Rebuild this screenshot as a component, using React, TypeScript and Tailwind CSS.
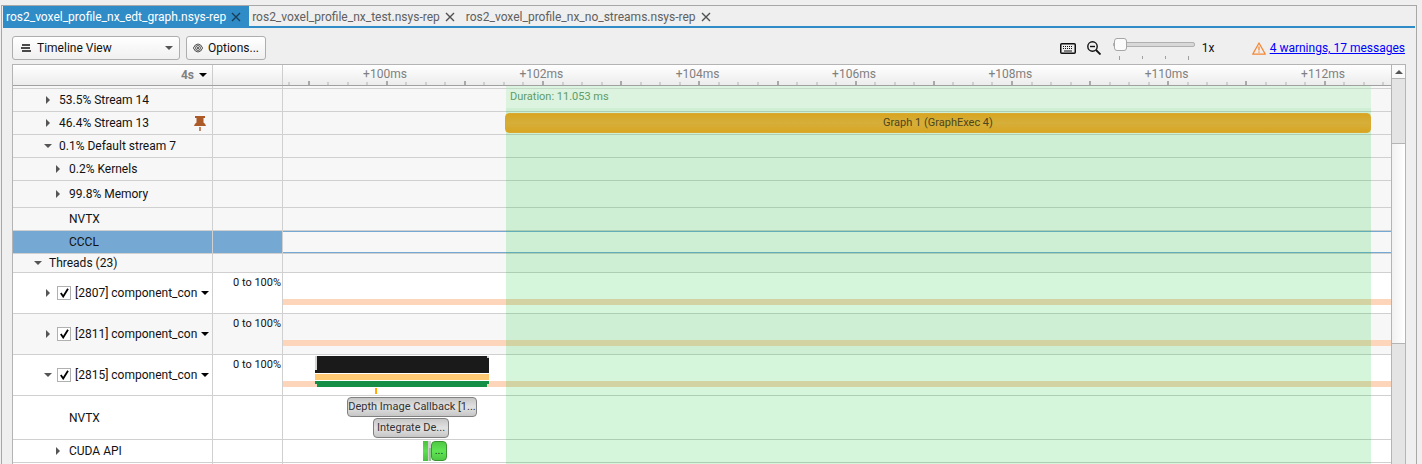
import React from "react";

const AXIS = 1108;
const pct = (n: number) => `${(n / AXIS) * 100}%`;
const LABELS = [100, 102, 104, 106, 108, 110, 112];

function TriRight() {
  return (
    <svg className="h-2 w-1 shrink-0" viewBox="0 0 4 8" fill="#555"><path d="M0 0 4 4 0 8Z" /></svg>
  );
}
function TriDown({ dark = false }: { dark?: boolean }) {
  return (
    <svg className="h-1 w-2 shrink-0" viewBox="0 0 8 4" fill={dark ? "#000" : "#555"}><path d="M0 0H8L4 4Z" /></svg>
  );
}
function Cross() {
  return (
    <svg className="size-[10px]" viewBox="0 0 10 10" fill="none" stroke="currentColor" strokeWidth="1.4"><path d="M1 1 9 9M9 1 1 9" /></svg>
  );
}

function Tab({ name, active = false }: { name: string; active?: boolean }) {
  return (
    <div className={active
      ? "flex h-[22px] items-center gap-[5px] bg-[#308cc6] pl-[3px] pr-2 text-white"
      : "flex h-[22px] items-center gap-[5px] pl-[3px] pr-2 text-[#606060]"}>
      <button role="tab" aria-selected={active} className="leading-5">{name}</button>
      <button aria-label={`Close ${name}`} className={active ? "text-[#173f5a]" : "text-[#505050]"}><Cross /></button>
    </div>
  );
}

function Toolbar() {
  return (
    <div className="flex h-9 items-center pl-[10px] pr-[11px] pt-1">
      <button className="flex h-6 w-[168px] items-center rounded-[3px] border border-[#aeaeae] bg-linear-to-b from-white to-[#f0f0f0] pl-2 pr-[6px]">
        <svg className="mr-[6px] h-2 w-[10px]" viewBox="0 0 10 8" stroke="#111" strokeWidth="1.3"><path d="M1 1H9M0 4H9M1 7H10" /></svg>
        <span className="flex-1 text-left">Timeline View</span>
        <TriDown />
      </button>
      <button className="ml-[6px] flex h-6 w-20 items-center gap-[5px] rounded-[3px] border border-[#aeaeae] bg-linear-to-b from-white to-[#f0f0f0] pl-[6px]">
        <svg className="h-[10px] w-[10px] shrink-0" viewBox="0 0 10 10" fill="none" stroke="#222" strokeWidth=".8"><path d="M.4 5Q2 1 5 1T9.600 5Q8 9 5 9T.4 5Z" /><circle cx="5" cy="5" r="2.400" /><circle cx="5" cy="5" r=".6" fill="#222" /></svg>
        Options...
      </button>
      <div className="flex-1" />
      <button aria-label="Keyboard shortcuts">
        <svg className="h-[11px] w-4" viewBox="0 0 16 11"><rect x=".75" y=".75" width="14.500" height="9.500" rx="1" fill="none" stroke="#111" strokeWidth="1.500" /><path d="M3 3.500H13M3 5.500H13" stroke="#111" strokeWidth="1" strokeDasharray="1 1" /><path d="M4 8H12" stroke="#111" /></svg>
      </button>
      <button aria-label="Zoom out" className="ml-[11px]">
        <svg className="size-[14px]" viewBox="0 0 14 14" fill="none" stroke="#111" strokeWidth="1.400"><circle cx="5.500" cy="5.500" r="4.700" /><path d="M3 5.500H8" /><path d="M9 9 13.500 13.500" strokeWidth="1.800" /></svg>
      </button>
      <div className="ml-3 flex h-6 w-[82px] flex-col pt-px">
        <input type="range" min="1" max="100" defaultValue="1" aria-label="Zoom"
          className="h-[14px] w-full appearance-none bg-transparent [&::-webkit-slider-runnable-track]:h-[5px] [&::-webkit-slider-runnable-track]:rounded-[2px] [&::-webkit-slider-runnable-track]:border [&::-webkit-slider-runnable-track]:border-[#b0b0b0] [&::-webkit-slider-runnable-track]:bg-[#d8d8d8] [&::-webkit-slider-thumb]:-mt-[5px] [&::-webkit-slider-thumb]:size-[13px] [&::-webkit-slider-thumb]:appearance-none [&::-webkit-slider-thumb]:rounded-[3px] [&::-webkit-slider-thumb]:border [&::-webkit-slider-thumb]:border-[#a6a6a6] [&::-webkit-slider-thumb]:bg-[#fbfbfb]" />
        <div className="mt-[5px] flex justify-between px-[6px]">
          {[0, 1, 2, 3].map((i) => <i key={i} className={i % 3 ? "h-[3px] w-px bg-[#a0a0a0]" : "h-1 w-px bg-[#a0a0a0]"} />)}
        </div>
      </div>
      <span className="ml-[7px] w-[50px]">1x</span>
      <svg className="mr-1 h-[13px] w-[14px]" viewBox="0 0 14 13" fill="none" stroke="#f58634" strokeWidth="1.300" strokeLinejoin="round"><path d="M7 1 13.300 12.200H.7Z" /><path d="M7 4.500V8.500M7 9.500V10.800" /></svg>
      <a href="#messages" className="text-[#0000ff] underline">4 warnings, 17 messages</a>
    </div>
  );
}

function Ruler() {
  const ticks = Array.from({ length: 57 }, (_, i) => ({ x: 5 + i * 19.54, major: i % 4 === 1 }));
  return (
    <div className="relative h-5 min-w-0 flex-1 overflow-hidden">
      {LABELS.map((ms, i) => (
        <span key={ms} className="absolute top-0 -translate-x-1/2 text-[12px] leading-[18px] text-[#808080]" style={{ left: pct(102 + i * 156.33) }}>+{ms}ms</span>
      ))}
      {ticks.map((t) => (
        <i key={t.x} className={t.major ? "absolute bottom-0 h-1 w-[2px] bg-[#a9a9a9]" : "absolute bottom-0 h-[3px] w-[2px] bg-[#cfcfcf]"} style={{ left: pct(t.x) }} />
      ))}
    </div>
  );
}

function Header() {
  return (
    <div className="flex h-[21px] border-b border-[#a0a0a0] bg-linear-to-b from-white to-[#ececec]">
      <div className="flex w-[200px] items-center justify-end gap-[5px] border-r border-[#cdcdcd] pr-[5px] font-bold text-[#808080]">
        4s <TriDown dark />
      </div>
      <div className="w-[70px] border-r border-[#cdcdcd]" />
      <Ruler />
    </div>
  );
}

type RowProps = {
  height: string;
  indent?: string;
  label?: string;
  arrow?: "right" | "down";
  white?: boolean;
  selected?: boolean;
  thread?: boolean;
  pinned?: boolean;
  children?: React.ReactNode;
};

function Row({ height, indent = "pl-8", label, arrow, white, selected, thread, pinned, children }: RowProps) {
  const bg = selected ? "bg-[#75a9d4]" : white ? "bg-white" : "bg-[#f7f7f7]";
  return (
    <div className={`flex ${height}`}>
      <div className={`flex w-[200px] items-center border-r border-b border-[#d0d0d0] ${thread ? "pr-[3px]" : "pr-[6px]"} ${bg} ${indent}`}>
        {label && <span className={`flex shrink-0 items-center ${thread ? "w-3" : "w-[14px]"}`}>{arrow === "right" ? <span className="pl-px"><TriRight /></span> : arrow === "down" ? <span className="-ml-px"><TriDown /></span> : null}</span>}
        {thread ? (
          <label className="flex flex-1 items-center gap-1 whitespace-nowrap">
            <span className="grid place-items-center">
              <input type="checkbox" defaultChecked className="peer col-start-1 row-start-1 size-[14px] appearance-none border border-[#b0b0b0] bg-white" />
              <svg className="pointer-events-none col-start-1 row-start-1 hidden h-[10px] w-[9px] peer-checked:block" viewBox="0 0 9 10" fill="none" stroke="#000" strokeWidth="1.800"><path d="M.8 5 3.200 8.500 8 .8" /></svg>
            </span>
            {label}
          </label>
        ) : <span className="flex-1 whitespace-nowrap">{label}</span>}
        {thread && <TriDown dark />}
        {pinned && <svg className="h-[15px] w-3" viewBox="0 0 12 15" fill="#ac5a28"><path d="M1 0H11V2H9.500V6.500Q11.500 7.500 12 10H0Q.5 7.500 2.500 6.500V2H1ZM5.300 11H6.700V15H5.300Z" /></svg>}
      </div>
      <div className={`w-[70px] border-r border-b border-[#d0d0d0] pr-px pt-[2px] text-right text-[11px] leading-4 ${bg}`}>{thread && "0 to 100%"}</div>
      <div className={`relative min-w-0 flex-1 border-b border-[#d0d0d0] ${white ? "bg-white" : "bg-[#f7f7f7]"}`}>
        {selected && <div className="h-full border-y border-[#75a9d4]" />}
        {thread && <div className="mt-[26px] h-[6px] bg-[#fcd5bb]" />}
        {children}
      </div>
    </div>
  );
}

function Activity() {
  return (
    <svg className="absolute inset-0 h-10 w-full" viewBox="0 0 1108 40" preserveAspectRatio="none" shapeRendering="crispEdges">
      <path d="M32 1H206V18H32Z" fill="#1a1a1a" />
      <path d="M32 1H34V15H32ZM204 1H206V3H204Z" fill="#d4d4d4" />
      <path d="M32 18H206V26H32Z" fill="#fff" />
      <path d="M32 19H206V25H32Z" fill="#ffc873" />
      <path d="M32 26H206V29H204V32H34V29H32Z" fill="#148f45" />
      <path d="M92 33H93V39H92Z" fill="#c9b27c" />
      <path d="M93 33H94V39H93Z" fill="#ffa800" />
    </svg>
  );
}

const range = "absolute overflow-hidden whitespace-nowrap rounded-[4px] border text-center text-[11px] leading-[18px] h-5";

function Rows() {
  return (
    <div className="relative">
      <Row height="h-[3px]" />
      <Row height="h-[23px]" label="53.5% Stream 14" arrow="right" />
      <Row height="h-[23px]" label="46.4% Stream 13" arrow="right" pinned>
        <div className={`${range} top-px z-20 border-[#d9a930] bg-linear-to-b from-[#d8a520] via-[#d5af3a] to-[#d8a520] text-[#4d451c]`} style={{ left: pct(222), width: pct(866) }}>Graph 1 (GraphExec 4)</div>
      </Row>
      <Row height="h-[23px]" label="0.1% Default stream 7" arrow="down" />
      <Row height="h-[23px]" label="0.2% Kernels" arrow="right" indent="pl-[42px]" />
      <Row height="h-[27px]" label="99.8% Memory" arrow="right" indent="pl-[42px]" />
      <Row height="h-[23px]" label="NVTX" indent="pl-[42px]" />
      <Row height="h-[23px]" label="CCCL" indent="pl-[42px]" selected />
      <Row height="h-[19px]" label="Threads (23)" arrow="down" indent="pl-[22px]" />
      <Row height="h-[41px]" label="[2807] component_con" arrow="right" thread white />
      <Row height="h-[41px]" label="[2811] component_con" arrow="right" thread />
      <Row height="h-[41px]" label="[2815] component_con" arrow="down" thread white><Activity /></Row>
      <Row height="h-[44px]" label="NVTX" indent="pl-[42px]" white>
        <div className={`${range} top-px border-[#808080] bg-linear-to-b from-[#c6c6c6] via-[#e2e2e2] to-[#c6c6c6] text-[#333]`} style={{ left: pct(64), width: pct(130) }}>Depth Image Callback [1...</div>
        <div className={`${range} top-[22px] border-[#808080] bg-linear-to-b from-[#c6c6c6] via-[#e2e2e2] to-[#c6c6c6] text-[#333]`} style={{ left: pct(90), width: pct(76) }}>Integrate De...</div>
      </Row>
      <Row height="h-[23px]" label="CUDA API" arrow="right" indent="pl-[42px]" white>
        <div className="absolute top-px h-5 bg-linear-to-b from-[#4bc040] via-[#5be04f] to-[#4bc040]" style={{ left: pct(140), width: pct(5) }} />
        <div className="absolute top-px h-5 bg-[#d0d0d0]" style={{ left: pct(145), width: pct(3) }} />
        <div className="absolute top-2 h-[13px] bg-[#8fc98a]" style={{ left: pct(146), width: pct(2) }} />
        <div className={`${range} top-px border-[#3a9432] bg-linear-to-b from-[#4fc944] via-[#60e554] to-[#4fc944] text-[#173d13]`} style={{ left: pct(148), width: pct(16) }}>...</div>
      </Row>
      <Row height="h-10" white />
      <div className="pointer-events-none absolute inset-y-0 left-[270px] right-0 z-10">
        <div className="relative h-full">
          <div className="absolute inset-y-0 bg-[rgba(0,200,40,0.16)]" style={{ left: pct(223), width: pct(865) }}>
            <div className="h-[22px] bg-white/25 pl-1 pt-[3px] text-[11px] leading-4 text-[#619b69]">Duration: 11.053 ms</div>
          </div>
        </div>
      </div>
    </div>
  );
}

function Scrollbar() {
  return (
    <div aria-hidden="true" className="flex w-[15px] shrink-0 flex-col border-x border-[#b4b4b4] bg-[#e4e4e4]">
      <div className="flex h-[14px] items-center justify-center border-b border-[#b4b4b4] bg-[#fafafa]">
        <svg className="h-1 w-2" viewBox="0 0 8 4" fill="#555"><path d="M0 4H8L4 0Z" /></svg>
      </div>
      <div className="mt-16 h-[201px] border-y border-[#b4b4b4] bg-linear-to-r from-[#f1f1f1] to-white" />
    </div>
  );
}

export default function App() {
  return (
    <div className="h-screen overflow-hidden bg-[#efefef] pl-px pr-[5px] pt-[5px] font-['Roboto',sans-serif] text-[12px] leading-4 text-[#111]">
      <div className="flex h-full flex-col border-x border-t border-[#a8a8a8]">
        <div role="tablist" className="mx-px flex h-[22px] shrink-0 border-b-2 border-[#308cc6]">
          <Tab name="ros2_voxel_profile_nx_edt_graph.nsys-rep" active />
          <Tab name="ros2_voxel_profile_nx_test.nsys-rep" />
          <Tab name="ros2_voxel_profile_nx_no_streams.nsys-rep" />
        </div>
        <Toolbar />
        <div className="mx-[10px] flex min-h-0 flex-1 overflow-hidden border-l border-t border-[#b4b4b4]">
          <div className="min-w-0 flex-1">
            <Header />
            <Rows />
          </div>
          <Scrollbar />
        </div>
      </div>
    </div>
  );
}
